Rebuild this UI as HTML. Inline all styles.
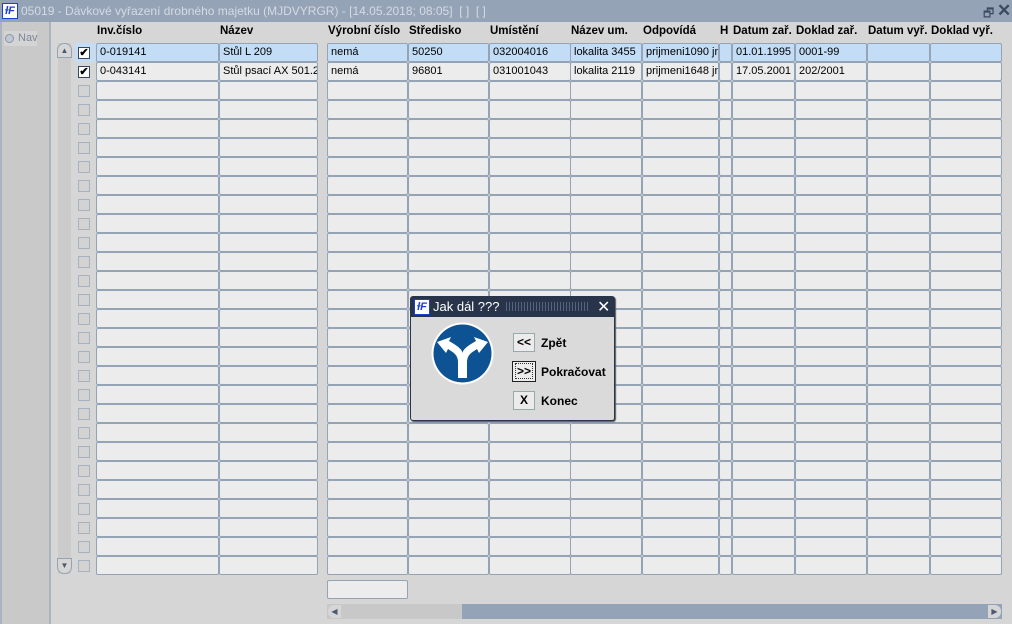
<!DOCTYPE html>
<html><head><meta charset="utf-8"><style>
*{margin:0;padding:0;box-sizing:border-box}
body{width:1012px;height:624px;overflow:hidden;background:#d6d6d6;font-family:"Liberation Sans",sans-serif;font-size:11px;color:#000;position:relative}
.a{position:absolute}
.title{left:0;top:0;width:1012px;height:22px;background:#95a3b6;color:#d4dbe4;font-size:12px;line-height:22px;padding-left:21px;white-space:pre}
.logo{left:2px;top:3px;width:16px;height:16px;background:#fff;border:1px solid #1b3fd6;color:#1b3fd6;font:italic bold 11px/14px "Liberation Sans",sans-serif;text-align:center}
.hd{top:25px;font-weight:bold;font-size:11.5px}
.c{height:19px;border:1px solid #94a3b5;border-radius:2px;background:#ececec;line-height:17px;padding-left:3px;white-space:nowrap;overflow:hidden}
.sel{background:#c3ddf6}
.cb{width:12px;height:12px;border:1px solid #a7b2c0;background:#d3d3d3}
.cbon{background:#fff;border:1px solid #37475e;font-size:11px;line-height:10px;text-align:center;font-weight:bold}
.bt{font-weight:bold;font-size:12px}
</style></head><body>
<div class="a title">05019 - Dávkové vyřazení drobného majetku (MJDVYRGR) - [14.05.2018; 08:05]  [ ]  [ ]</div>
<div class="a logo"><span style="background:#fff;color:#1b3fd6">ɫF</span></div>
<div class="a" style="left:983px;top:4px;color:#3a4a60;font-size:12px">🗗</div>
<div class="a" style="left:997px;top:1px;color:#3a4a60;font-size:17px;font-weight:bold">✕</div>
<div class="a" style="left:0;top:22px;width:51px;height:602px;background:#c9c9c9;border-left:2px solid #aab3c0;border-right:2px solid #aab3c0"></div>
<div class="a" style="left:4px;top:31px;width:33px;height:15px;background:#d4d4d4;color:#7a8799;font-size:11px;line-height:15px;padding-left:14px">Nav</div>
<div class="a" style="left:5px;top:34px;width:9px;height:9px;border-radius:50%;border:1px solid #8896a8;background:#c0c8d2"></div>
<div class="a" style="left:58px;top:43px;width:13px;height:531px;background:#cbcbcb"></div>
<div class="a" style="left:57px;top:43px;width:15px;height:15px;border:1px solid #94a3b5;border-radius:7px 7px 0 0;background:#d6d6d6;color:#4a5a70;font-size:8px;text-align:center;line-height:13px">▲</div>
<div class="a" style="left:57px;top:558px;width:15px;height:16px;border:1px solid #94a3b5;border-radius:0 0 7px 7px;background:#d6d6d6;color:#4a5a70;font-size:8px;text-align:center;line-height:13px">▼</div>
<div id="g"></div>
<div class="a c" style="left:327px;top:580px;width:81px;height:19px"></div>
<div class="a" style="left:327px;top:604px;width:675px;height:15px;background:#95a3b6"></div>
<div class="a" style="left:327px;top:604px;width:135px;height:15px;background:#c8c8c8"></div>
<div class="a" style="left:328px;top:605px;width:13px;height:13px;background:#d6d6d6;border-radius:6px 0 0 6px;color:#4a5a70;font-size:8px;line-height:13px;text-align:center">◀</div>
<div class="a" style="left:988px;top:605px;width:13px;height:13px;background:#d6d6d6;border-radius:0 6px 6px 0;color:#4a5a70;font-size:8px;line-height:13px;text-align:center">▶</div>

<div class="a" style="left:410px;top:296px;width:205px;height:125px;background:#dadada;border:1px solid #27344a;border-radius:3px;box-shadow:1px 1px 1px #555"></div>
<div class="a" style="left:411px;top:297px;width:203px;height:20px;background:#27344a"></div>
<div class="a logo" style="left:414px;top:299px">ɫF</div>
<div class="a" style="left:433px;top:299px;color:#fff;font-size:13px">Jak dál ???</div>
<div class="a" style="left:506px;top:302px;width:84px;height:9px;background:repeating-linear-gradient(90deg,#6a7890 0 1px,transparent 1px 3px);opacity:.7"></div>
<div class="a" style="left:597px;top:297px;color:#fff;font-size:16px">✕</div>
<svg class="a" style="left:431px;top:322px" width="63" height="63" viewBox="0 0 63 63">
<circle cx="31.5" cy="31.5" r="31" fill="#fff"/><circle cx="31.5" cy="31.5" r="29" fill="#0d5293"/>
<path d="M27 56 V40 Q27 33 20 29 L17 27 L15 31 L6 20 L20 15 L18 19 L23 22 Q31 27 31.5 31 Q32 27 40 22 L45 19 L43 15 L57 20 L48 31 L46 27 L43 29 Q36 33 36 40 V56 Z" fill="#fff"/>
</svg>
<div class="a bt" style="left:513px;top:333px;width:22px;height:19px;border:1px solid #9aa;background:#ececec;text-align:center;line-height:17px">&lt;&lt;</div>
<div class="a bt" style="left:541px;top:336px">Zpět</div>
<div class="a bt" style="left:512px;top:361px;width:24px;height:21px;border:1px solid #222;background:#ececec;text-align:center;line-height:19px"><span style="border:1px dotted #333;padding:0 1px">&gt;&gt;</span></div>
<div class="a bt" style="left:541px;top:365px">Pokračovat</div>
<div class="a bt" style="left:513px;top:391px;width:22px;height:19px;border:1px solid #9aa;background:#ececec;text-align:center;line-height:17px">X</div>
<div class="a bt" style="left:541px;top:394px">Konec</div>
<script>
var cols=[[96,123,"Inv.číslo"],[219,99,"Název"],[327,81,"Výrobní číslo"],[408,81,"Středisko"],[489,82,"Umístění"],[570,72,"Název um."],[642,77,"Odpovídá"],[719,13,"H"],[732,63,"Datum zař."],[795,72,"Doklad zař."],[867,63,"Datum vyř."],[930,72,"Doklad vyř."]];
var d=[["0-019141","Stůl L 209","nemá","50250","032004016","lokalita 3455","prijmeni1090 jm","","01.01.1995","0001-99","",""],
["0-043141","Stůl psací AX 501.2","nemá","96801","031001043","lokalita 2119","prijmeni1648 jm","","17.05.2001","202/2001","",""]];
var h="";
cols.forEach(function(c){h+='<div class="a hd" style="left:'+(c[0]+1)+'px">'+c[2]+'</div>'});
for(var r=0;r<28;r++){var y=43+r*19;
var on=r<2;
h+='<div class="a cb'+(on?' cbon':'')+'" style="left:78px;top:'+(y+4)+'px">'+(on?'✔':'')+'</div>';
if(r==0)h+='<div class="a" style="left:75px;top:'+y+'px;width:20px;height:19px;background:#c3ddf6;z-index:-1"></div>';
cols.forEach(function(c,i){h+='<div class="a c'+(r==0?' sel':'')+'" style="left:'+c[0]+'px;top:'+y+'px;width:'+c[1]+'px">'+(on?d[r][i]:'')+'</div>'});}
document.getElementById("g").innerHTML=h;
</script>
</body></html>
